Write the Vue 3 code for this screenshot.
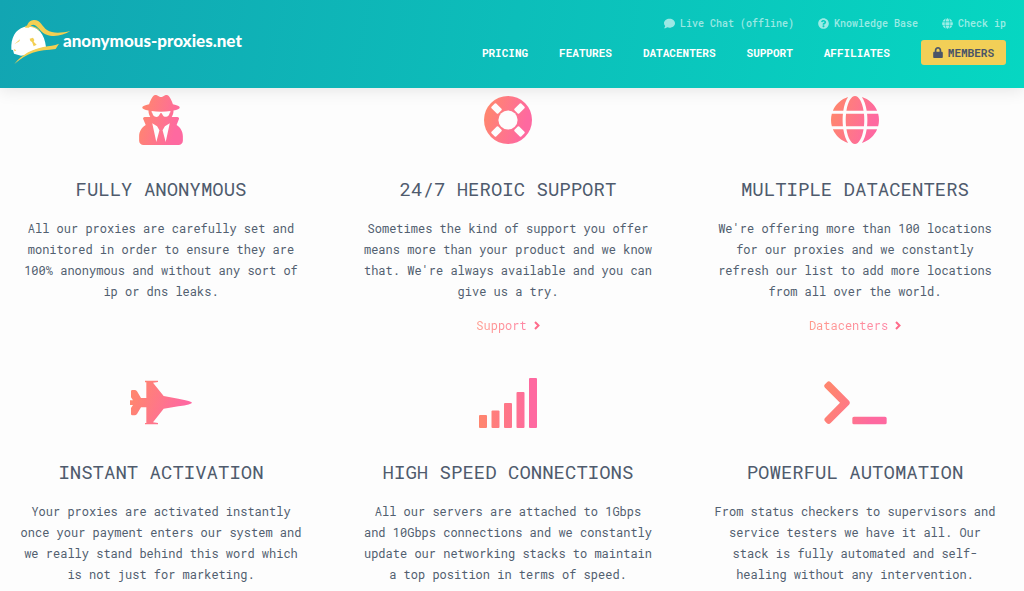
<script setup>
const globe =
  'M336.5 160C322 70.7 287.8 8 248 8s-74 62.7-88.5 152h177zM152 256c0 22.2 1.2 43.5 3.3 64h185.3c2.1-20.5 3.3-41.8 3.3-64s-1.2-43.5-3.3-64H155.3c-2.1 20.5-3.3 41.8-3.3 64zm324.7-96c-28.6-67.9-86.5-120.4-158-141.6 24.4 33.8 41.2 84.7 50 141.6h108zM177.2 18.4C105.8 39.6 47.8 92.1 19.3 160h108c8.7-56.9 25.5-107.8 49.9-141.6zM487.4 192H372.7c2.1 21 3.3 42.5 3.3 64s-1.2 43-3.3 64h114.6c5.5-20.5 8.6-41.8 8.6-64s-3.1-43.5-8.5-64zM120 256c0-21.5 1.2-43 3.3-64H8.6C3.2 212.5 0 233.8 0 256s3.2 43.5 8.6 64h114.6c-2-21-3.2-42.5-3.2-64zm39.5 96c14.5 89.3 48.7 152 88.5 152s74-62.7 88.5-152h-177zm159.3 141.6c71.4-21.2 129.4-73.7 158-141.6h-108c-8.8 56.9-25.6 107.8-50 141.6zM19.3 352c28.6 67.9 86.5 120.4 158 141.6-24.4-33.8-41.2-84.7-50-141.6h-108z'
const comment =
  'M256 32C114.6 32 0 125.1 0 240c0 49.6 21.4 95 57 130.7C44.5 421.1 2.7 466 2.2 466.5c-2.2 2.3-2.8 5.7-1.5 8.7S4.8 480 8 480c66.3 0 116-31.8 140.6-51.4 32.7 12.3 69 19.4 107.4 19.4 141.4 0 256-93.1 256-208S397.4 32 256 32z'
const question =
  'M504 256c0 136.997-111.043 248-248 248S8 392.997 8 256C8 119.083 119.043 8 256 8s248 111.083 248 248zM262.655 90c-54.497 0-89.255 22.957-116.549 63.758-3.536 5.286-2.353 12.415 2.715 16.258l34.699 26.31c5.205 3.947 12.621 3.008 16.665-2.122 17.864-22.658 30.113-35.797 57.303-35.797 20.429 0 45.698 13.148 45.698 32.958 0 14.976-12.363 22.667-32.534 33.976C247.128 238.528 216 254.941 216 296v4c0 6.627 5.373 12 12 12h56c6.627 0 12-5.373 12-12v-1.333c0-28.462 83.186-29.647 83.186-106.667 0-58.002-60.165-102-116.531-102zM256 338c-25.365 0-46 20.635-46 46 0 25.364 20.635 46 46 46s46-20.636 46-46c0-25.365-20.635-46-46-46z'

const topLinks = [
  { label: 'Live Chat (offline)', box: '0 0 512 512', d: comment },
  { label: 'Knowledge Base', box: '0 0 512 512', d: question },
  { label: 'Check ip', box: '0 0 496 512', d: globe },
]
const nav = ['Pricing', 'Features', 'Datacenters', 'Support', 'Affiliates']

const features = [
  {
    icon: 'spy',
    title: 'Fully Anonymous',
    text: 'All our proxies are carefully set and monitored in order to ensure they are 100% anonymous and without any sort of ip or dns leaks.',
  },
  {
    icon: 'ring',
    title: '24/7 Heroic Support',
    text: "Sometimes the kind of support you offer means more than your product and we know that. We're always available and you can give us a try.",
    link: 'Support',
  },
  {
    icon: 'globe',
    title: 'Multiple Datacenters',
    text: "We're offering more than 100 locations for our proxies and we constantly refresh our list to add more locations from all over the world.",
    link: 'Datacenters',
  },
  {
    icon: 'jet',
    title: 'Instant Activation',
    text: 'Your proxies are activated instantly once your payment enters our system and we really stand behind this word which is not just for marketing.',
  },
  {
    icon: 'signal',
    title: 'High Speed Connections',
    text: 'All our servers are attached to 1Gbps and 10Gbps connections and we constantly update our networking stacks to maintain a top position in terms of speed.',
  },
  {
    icon: 'terminal',
    title: 'Powerful Automation',
    text: 'From status checkers to supervisors and service testers we have it all. Our stack is fully automated and self-healing without any intervention.',
  },
]
</script>

<template>
  <div class="page">
    <header class="header">
      <a class="brand" href="#">
        <svg class="helmet" viewBox="30 54 186 141" aria-hidden="true">
          <path fill="#fff" d="M34 136C36 104 54 82 82 79C112 77 134 101 138 141C112 146 92 153 73 166L63 167L42 161L39 150L34 149Z" />
          <path fill="#f3cf53" d="M74 83C84 80 82 61 101 60C122 59 126 80 141 90C158 101 184 99 211 93C194 104 173 110 150 107C126 104 119 85 105 76C98 71 90 79 87 83Z" />
          <path fill="#f3cf53" d="M43 192C66 163 98 147 130 141C149 137 163 137 177 131L167 147C142 151 119 150 98 158C79 165 61 176 43 192Z" />
          <path fill="#f3cf53" d="M43 133L60 118L58 124ZM41 147L49 151L44 154ZM89 116L99 113L103 120L101 125L110 134L101 139L96 126L91 123Z" />
          <path fill="none" stroke="#f3cf53" stroke-width="3" d="M76 79Q106 77 118 92" />
        </svg>
        <span class="brand-name">anonymous-proxies.net</span>
      </a>
      <div class="menus">
        <nav class="top-links" aria-label="Help">
          <a v-for="item in topLinks" :key="item.label" href="#">
            <svg :viewBox="item.box" aria-hidden="true"><path :d="item.d" /></svg>
            {{ item.label }}
          </a>
        </nav>
        <nav class="main-nav" aria-label="Main">
          <a v-for="item in nav" :key="item" href="#">{{ item }}</a>
          <button class="members" type="button">
            <svg viewBox="0 0 448 512" aria-hidden="true">
              <path d="M400 224h-24v-72C376 68.2 307.8 0 224 0S72 68.2 72 152v72H48c-26.5 0-48 21.5-48 48v192c0 26.5 21.5 48 48 48h352c26.5 0 48-21.5 48-48V272c0-26.5-21.5-48-48-48zm-104 0H152v-72c0-39.7 32.3-72 72-72s72 32.3 72 72v72z" />
            </svg>
            Members
          </button>
        </nav>
      </div>
    </header>

    <svg class="defs" width="0" height="0" aria-hidden="true">
      <defs>
        <linearGradient id="warm" x1="0" y1="0.2" x2="1" y2="0.5">
          <stop offset="0.1" stop-color="#ff8570" />
          <stop offset="0.9" stop-color="#fe69a0" />
        </linearGradient>
        <linearGradient id="warm-bars" gradientUnits="userSpaceOnUse" x1="0" y1="25" x2="58" y2="25">
          <stop offset="0.05" stop-color="#ff8570" />
          <stop offset="0.9" stop-color="#fe69a0" />
        </linearGradient>
        <mask id="ring-mask">
          <rect width="48" height="48" fill="#fff" />
          <circle cx="24" cy="24" r="9.6" fill="#000" />
          <g fill="#000">
            <rect v-for="a in [45, 135, 225, 315]" :key="a" x="35.5" y="20.7" width="9.5" height="6.6" rx="1" :transform="`rotate(${a} 24 24)`" />
          </g>
        </mask>
      </defs>
    </svg>

    <main class="features">
      <article v-for="f in features" :key="f.title" class="feature">
        <div class="icon">
          <svg v-if="f.icon === 'spy'" width="44" height="50" viewBox="0 0 448 512" aria-hidden="true">
            <path fill="url(#warm)" d="M383.9 308.3l23.9-62.6c4-10.5-3.7-21.7-15-21.7h-58.5c11-18.9 17.8-40.6 17.8-64v-.3c39.2-7.8 64-19.1 64-31.7 0-13.3-27.3-25.1-70.1-33-9.2-32.8-27-65.8-40.6-82.8-9.5-11.9-25.9-15.6-39.5-8.8l-27.6 13.8c-9 4.5-19.6 4.5-28.6 0L182.1 3.4c-13.6-6.8-30-3.1-39.5 8.8-13.5 17-31.4 50-40.6 82.8-42.7 7.9-70 19.7-70 33 0 12.6 24.8 23.9 64 31.7v.3c0 23.4 6.8 45.1 17.8 64H56.3c-11.5 0-19.2 11.7-14.7 22.3l25.8 60.2C27.3 329.8 0 372.7 0 422.4v44.8C0 491.9 20.1 512 44.8 512h358.4c24.7 0 44.8-20.1 44.8-44.8v-44.8c0-48.4-25.8-90.4-64.1-114.1zM176 480l-41.6-192 49.6 32 24 40-32 120zm96 0l-32-120 24-40 49.6-32L272 480zm41.7-298.5c-3.9 11.9-7 24.6-16.5 33.4-10.1 9.3-48 22.4-64-25-2.8-8.4-15.4-8.4-18.3 0-17 50.2-56 32.4-64 25-9.5-8.8-12.7-21.5-16.5-33.4-.8-2.5-6.3-5.7-6.3-5.8v-10.8c28.3 3.6 61 5.8 96 5.8s67.7-2.1 96-5.8v10.8c-.1.1-5.6 3.2-6.4 5.8z" />
          </svg>
          <svg v-else-if="f.icon === 'ring'" width="48" height="48" viewBox="0 0 48 48" aria-hidden="true">
            <circle cx="24" cy="24" r="24" fill="url(#warm)" mask="url(#ring-mask)" />
          </svg>
          <svg v-else-if="f.icon === 'globe'" width="48" height="50" viewBox="0 0 496 512" aria-hidden="true">
            <path fill="url(#warm)" :d="globe" />
          </svg>
          <svg v-else-if="f.icon === 'jet'" width="63" height="46" viewBox="45 31 189 138" aria-hidden="true">
            <path fill="url(#warm)" d="M90 33H129V37L114 39L146 79L190 87Q231 94 231 99Q231 104 190 110L146 117L114 158L129 160V164H90V160H94V113H78L66 133Q63 137 59 137H52Q48 137 48 133V115L54 106H45V92H54L48 83V65Q48 61 52 61H59Q63 61 66 65L78 85H94V38H90Z" />
          </svg>
          <svg v-else-if="f.icon === 'signal'" width="58" height="50" viewBox="0 0 58 50" aria-hidden="true">
            <g fill="url(#warm-bars)">
              <rect x="0" y="37" width="8" height="13" rx="1" />
              <rect x="12.5" y="32.5" width="8" height="17.5" rx="1" />
              <rect x="25" y="25" width="8" height="25" rx="1" />
              <rect x="37.5" y="14" width="8" height="36" rx="1" />
              <rect x="50" y="0" width="8" height="50" rx="1" />
            </g>
          </svg>
          <svg v-else width="63" height="44" viewBox="42 34 189 132" aria-hidden="true">
            <path fill="url(#warm)" d="M51 38Q56 32 62 38L117 93Q122 99 117 105L62 160Q56 166 50 160L45 155Q41 150 45 145L90 99L45 54Q40 49 45 44ZM132 141H225Q230 141 230 146V159Q230 164 225 164H132Q127 164 127 159V146Q127 141 132 141Z" />
          </svg>
        </div>
        <h3>{{ f.title }}</h3>
        <p>{{ f.text }}</p>
        <a v-if="f.link" class="more" href="#">
          <span>{{ f.link }}</span>
          <svg width="6" height="9" viewBox="0 0 6 9" aria-hidden="true">
            <path d="M1 1L4.5 4.5L1 8" fill="none" stroke="#fe6b8b" stroke-width="2" />
          </svg>
        </a>
      </article>
    </main>
  </div>
</template>

<style>
body {
  margin: 0;
  background: #fdfdfd;
}
</style>

<style scoped>
.page {
  font-family: "Roboto Mono", "DejaVu Sans Mono", "Liberation Mono", monospace;
  color: #525f70;
}
.header {
  display: flex;
  justify-content: space-between;
  align-items: flex-start;
  box-sizing: border-box;
  min-height: 88px;
  padding: 16px 18px 16px 10px;
  background: linear-gradient(100deg, #12a5b2, #06d7c2);
  box-shadow: 0 2px 16px rgba(0, 0, 0, 0.1);
}
a {
  color: inherit;
  text-decoration: none;
}
.brand {
  display: flex;
  align-items: center;
  color: #fff;
}
.helmet {
  width: 62px;
  height: 47px;
  margin-top: 2px;
  margin-right: -9px;
}
.brand-name {
  font: 900 17px/24px Lato, "Open Sans", sans-serif;
}
.menus {
  display: flex;
  flex-direction: column;
  align-items: flex-end;
  gap: 9px;
}
.top-links {
  display: flex;
  gap: 24px;
  font-size: 10px;
  font-weight: 500;
  line-height: 15px;
  color: rgba(255, 255, 255, 0.6);
}
.top-links a {
  display: flex;
  align-items: center;
  gap: 5px;
}
.top-links svg {
  width: 11px;
  height: 11px;
  fill: currentColor;
}
.main-nav {
  display: flex;
  align-items: center;
  gap: 31px;
  font-size: 11px;
  font-weight: 700;
  color: #fff;
  text-transform: uppercase;
}
.members {
  display: flex;
  align-items: center;
  gap: 5px;
  padding: 0 12px;
  border: 0;
  border-radius: 3px;
  background: #f2cf57;
  color: #4a5568;
  font: inherit;
  line-height: 25px;
  text-transform: uppercase;
}
.members svg {
  width: 10px;
  height: 11px;
  fill: currentColor;
}
.defs {
  position: absolute;
}
.features {
  display: grid;
  grid-template-columns: repeat(3, 1fr);
  gap: 43px 55px;
  padding: 7px 23px 5px 15px;
}
.feature {
  display: flex;
  flex-direction: column;
  align-items: center;
  text-align: center;
}
.icon {
  display: flex;
  align-items: center;
  justify-content: center;
  height: 50px;
}
h3 {
  margin: 30px 0 0;
  font-size: 19px;
  font-weight: 400;
  line-height: 28px;
  color: #4f5b6d;
  text-transform: uppercase;
  white-space: nowrap;
}
p {
  margin: 15px 0 0;
  font-size: 12px;
  line-height: 21px;
}
.more {
  display: flex;
  align-items: center;
  gap: 7px;
  margin-top: 13px;
  font-size: 12px;
  line-height: 20px;
}
.more span {
  background: linear-gradient(90deg, #ff9b8c, #fe87a6);
  background-clip: text;
  color: transparent;
}
</style>
